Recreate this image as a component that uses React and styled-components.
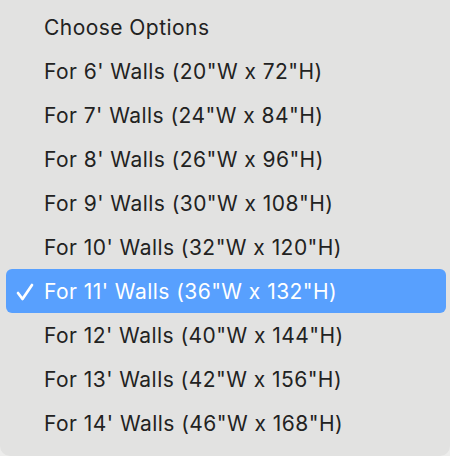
import React from "react";
import styled, { createGlobalStyle } from "styled-components";

const Global = createGlobalStyle`
  html, body { margin: 0; padding: 0; background: #ededec; }
  body { font-family: Inter, "Noto Sans", sans-serif; }
`;

const Menu = styled.div`
  width: 450px;
  height: 456px;
  box-sizing: border-box;
  background: #e2e2e1;
  border-radius: 0 0 10px 10px;
  padding: 5px 4px 0 6px;
  display: flex;
  flex-direction: column;
`;

const Item = styled.div`
  height: 44px;
  flex: none;
  display: flex;
  align-items: center;
  border-radius: 6px;
  padding-left: 38px;
  position: relative;
  font-size: 21px;
  letter-spacing: 0.45px;
  color: ${(p) => (p.$selected ? "#ffffff" : "#222222")};
  background: ${(p) => (p.$selected ? "#58a0fe" : "transparent")};
  white-space: nowrap;
`;

const Check = styled.svg`
  position: absolute;
  left: 10px;
  top: 14px;
  width: 18px;
  height: 18px;
`;

const items = [
  "Choose Options",
  `For 6' Walls (20"W x 72"H)`,
  `For 7' Walls (24"W x 84"H)`,
  `For 8' Walls (26"W x 96"H)`,
  `For 9' Walls (30"W x 108"H)`,
  `For 10' Walls (32"W x 120"H)`,
  `For 11' Walls (36"W x 132"H)`,
  `For 12' Walls (40"W x 144"H)`,
  `For 13' Walls (42"W x 156"H)`,
  `For 14' Walls (46"W x 168"H)`,
];

export default function App() {
  return (
    <>
      <Global />
      <Menu>
        {items.map((t, i) => (
          <Item key={t} $selected={i === 6}>
            {i === 6 && (
              <Check viewBox="0 0 18 18">
                <path d="M2 10 L6.5 16 L16 2" fill="none" stroke="#fff" strokeWidth="2.7" strokeLinecap="round" strokeLinejoin="round" />
              </Check>
            )}
            {t}
          </Item>
        ))}
      </Menu>
    </>
  );
}
